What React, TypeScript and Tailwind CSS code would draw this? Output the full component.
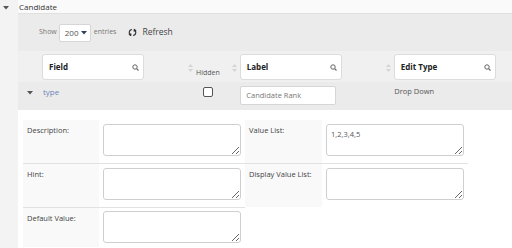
import React from "react";

const SortIcon = () => (
  <svg width="5" height="8" viewBox="0 0 5 8" className="shrink-0">
    <path d="M2.5 0 L5 3 L0 3 Z" fill="#d4d4d4" />
    <path d="M2.5 8 L5 5 L0 5 Z" fill="#d4d4d4" />
  </svg>
);

const SearchIcon = () => (
  <svg width="7" height="7" viewBox="0 0 7 7" className="shrink-0">
    <circle cx="3" cy="3" r="2.2" fill="none" stroke="#666" strokeWidth="1" />
    <path d="M4.6 4.6 L6.5 6.5" stroke="#666" strokeWidth="1.2" />
  </svg>
);

const Caret = ({ color = "#555" }: { color?: string }) => (
  <svg width="6" height="4" viewBox="0 0 6 4">
    <path d="M0 0 L6 0 L3 3.5 Z" fill={color} />
  </svg>
);

const HeaderBox = ({ label }: { label: string }) => (
  <div className="w-[102px] h-[26px] bg-white border border-[#dcdcdc] rounded-[3px] flex items-center justify-between pl-[6px] pr-[4px] shrink-0">
    <span className="text-[8px] font-bold text-[#222]">{label}</span>
    <SearchIcon />
  </div>
);

const TA = ({ value = "" }: { value?: string }) => (
  <textarea
    readOnly
    defaultValue={value}
    className="w-[138px] h-[32px] bg-white border border-[#cfcfcf] rounded-[3px] text-[7.5px] text-[#555] px-[4px] py-[4px] leading-[10px] block outline-none"
  />
);

const LabelCell = ({ text, w = 76 }: { text: string; w?: number }) => (
  <div
    className={`bg-[#f9f9f9] text-[7.5px] text-[#444] pl-[4px] pt-[5px] shrink-0 ${w === 76 ? "w-[76px]" : "w-[77px]"}`}
  >
    {text}
  </div>
);

export default function App() {
  return (
    <div className="w-[512px] h-[248px] flex overflow-hidden bg-white font-['Open_Sans',sans-serif]">
      <div className="w-[18px] shrink-0 bg-[#f3f3f3] pt-[6px] pl-[3px]">
        <Caret color="#555" />
      </div>
      <div className="flex-1 flex flex-col">
        <div className="h-[14px] bg-[#fafafa] border-b border-[#e0e0e0] text-[8px] text-[#333] pl-[1px] leading-[13px]">
          Candidate
        </div>
        <div className="h-[37px] bg-[#ebebeb] flex items-center pl-[21px] text-[7px] text-[#777]">
          <span>Show</span>
          <div className="ml-[2px] w-[32px] h-[18px] bg-white border border-[#d6d6d6] rounded-[2px] flex items-center justify-between pl-[5px] pr-[3px]">
            <span className="text-[8px] text-[#555]">200</span>
            <Caret color="#2f3f5f" />
          </div>
          <span className="ml-[3px]">entries</span>
          <svg width="9" height="9" viewBox="0 0 24 24" className="ml-[12px]" fill="none" stroke="#333" strokeWidth="3.2" strokeLinecap="round">
            <path d="M9 4.5 A8 8 0 0 0 7 19" />
            <path d="M15 19.5 A8 8 0 0 0 17 5" />
            <path d="M3.5 17.5 L7 19.5 L7.5 15.5" />
            <path d="M20.5 6.5 L17 4.5 L16.5 8.5" />
          </svg>
          <span className="ml-[5px] text-[8.5px] text-[#444]">Refresh</span>
        </div>
        <div className="h-[31px] bg-[#f0f0f0] flex items-start pt-[3px] pl-[24px]">
          <HeaderBox label="Field" />
          <div className="ml-[44px] flex items-start">
            <div className="mt-[10px]"><SortIcon /></div>
            <span className="ml-[3px] mt-[14px] text-[7px] text-[#555]">Hidden</span>
          </div>
          <div className="ml-[12px] mt-[10px]"><SortIcon /></div>
          <div className="ml-[3px]"><HeaderBox label="Label" /></div>
          <div className="ml-[44px] mt-[10px]"><SortIcon /></div>
          <div className="ml-[3px]"><HeaderBox label="Edit Type" /></div>
        </div>
        <div className="h-[28px] bg-[#ebebeb] flex items-start pl-[9px]">
          <div className="mt-[9px]"><Caret color="#555" /></div>
          <span className="ml-[10px] mt-[4px] text-[8px] text-[#6b86b8]">type</span>
          <div className="ml-[144px] mt-[5px] w-[10px] h-[10px] bg-white border border-[#555] rounded-[2px]" />
          <div className="ml-[27px] mt-[4px] w-[96px] h-[19px] bg-white border border-[#d6d6d6] rounded-[2px] flex items-center pl-[5px] text-[7.5px] text-[#777]">
            Candidate Rank
          </div>
          <span className="ml-[58px] mt-[4px] text-[7.5px] text-[#555]">Drop Down</span>
        </div>
        <div className="pt-[10px] pl-[5px] flex flex-col">
          <div className="flex w-[445px] border-b border-[#e2e2e2]">
            <LabelCell text="Description:" />
            <div className="p-[4px] pb-[7px]"><TA /></div>
            <LabelCell text="Value List:" w={77} />
            <div className="p-[4px] pb-[7px]"><TA value="1,2,3,4,5" /></div>
          </div>
          <div className="flex w-[445px]">
            <LabelCell text="Hint:" />
            <div className="p-[4px] pb-[7px]"><TA /></div>
            <LabelCell text="Display Value List:" w={77} />
            <div className="p-[4px] pb-[7px]"><TA /></div>
          </div>
          <div className="flex w-[222px] border-t border-[#e2e2e2]">
            <LabelCell text="Default Value:" />
            <div className="p-[3px_4px_4px_4px]"><TA /></div>
          </div>
        </div>
      </div>
    </div>
  );
}
